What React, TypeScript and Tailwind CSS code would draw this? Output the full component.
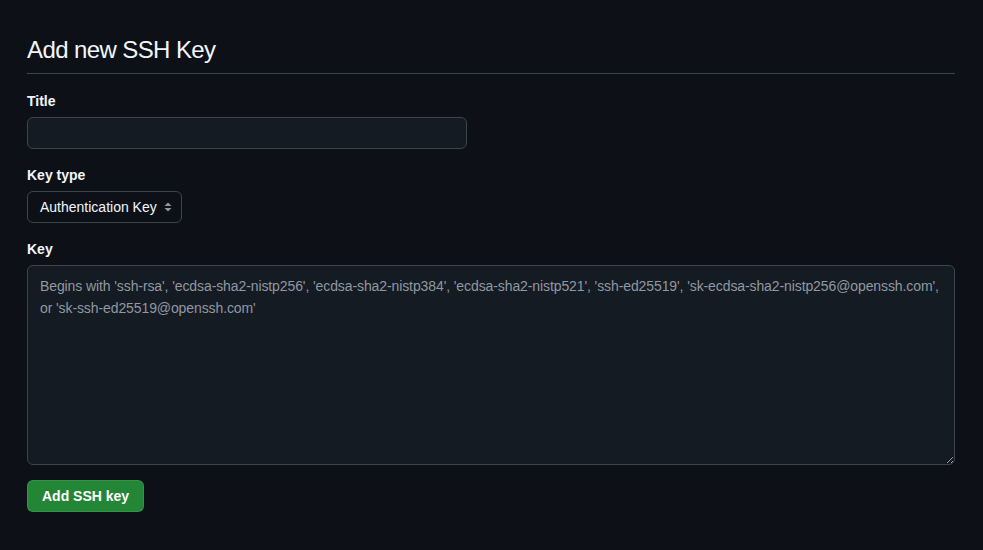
import React from "react";

export default function App() {
  return (
    <div
      className="min-h-[550px] w-full bg-[#0d1117] text-[#f0f6fc]"
      style={{ fontFamily: '"Liberation Sans", Arial, sans-serif' }}
    >
      <div className="px-[27px] pr-[28px] pt-[32px]">
        <div className="border-b border-[#3d444d] pb-[5px]">
          <h1 className="text-[24px] leading-[36px] font-normal tracking-[-0.6px] text-[#f0f6fc]">
            Add new SSH Key
          </h1>
        </div>

        <form className="flex flex-col">
          <div className="mt-[17px] flex flex-col">
            <label className="text-[14px] font-bold leading-[21px] mb-[5px]">Title</label>
            <input
              type="text"
              className="h-[32px] w-[440px] rounded-[6px] border border-[#3d444d] bg-[#151b23] px-3 text-[14px] text-[#f0f6fc] outline-none"
            />
          </div>

          <div className="mt-[16px] flex flex-col">
            <label className="text-[14px] font-bold leading-[21px] mb-[5px]">Key type</label>
            <div className="flex h-[32px] w-[155px] items-center justify-between rounded-[6px] border border-[#3d444d] bg-[#0d1117] pl-[12px] pr-[8px] text-[14px]">
              <span>Authentication Key</span>
              <svg width="10" height="12" viewBox="0 0 10 12" className="text-[#9198a1]">
                <path d="M5 1.5 L8.5 5 H1.5 Z" fill="currentColor" />
                <path d="M5 10.5 L8.5 7 H1.5 Z" fill="currentColor" />
              </svg>
            </div>
          </div>

          <div className="mt-[16px] flex flex-col">
            <label className="text-[14px] font-bold leading-[21px] mb-[5px]">Key</label>
            <textarea
              className="h-[200px] w-full rounded-[6px] border border-[#3d444d] bg-[#151b23] px-3 pt-[9px] text-[14px] leading-[22px] tracking-[-0.1px] text-[#f0f6fc] outline-none placeholder:text-[#9198a1]"
              placeholder={"Begins with 'ssh-rsa', 'ecdsa-sha2-nistp256', 'ecdsa-sha2-nistp384', 'ecdsa-sha2-nistp521', 'ssh-ed25519', 'sk-ecdsa-sha2-nistp256@openssh.com',\nor 'sk-ssh-ed25519@openssh.com'"}
            />
          </div>

          <div className="mt-[15px]">
            <button
              type="button"
              className="h-[32px] rounded-[6px] border border-[#ffffff1a] bg-[#238636] px-[14px] text-[14px] font-bold text-white"
            >
              Add SSH key
            </button>
          </div>
        </form>
      </div>
    </div>
  );
}
